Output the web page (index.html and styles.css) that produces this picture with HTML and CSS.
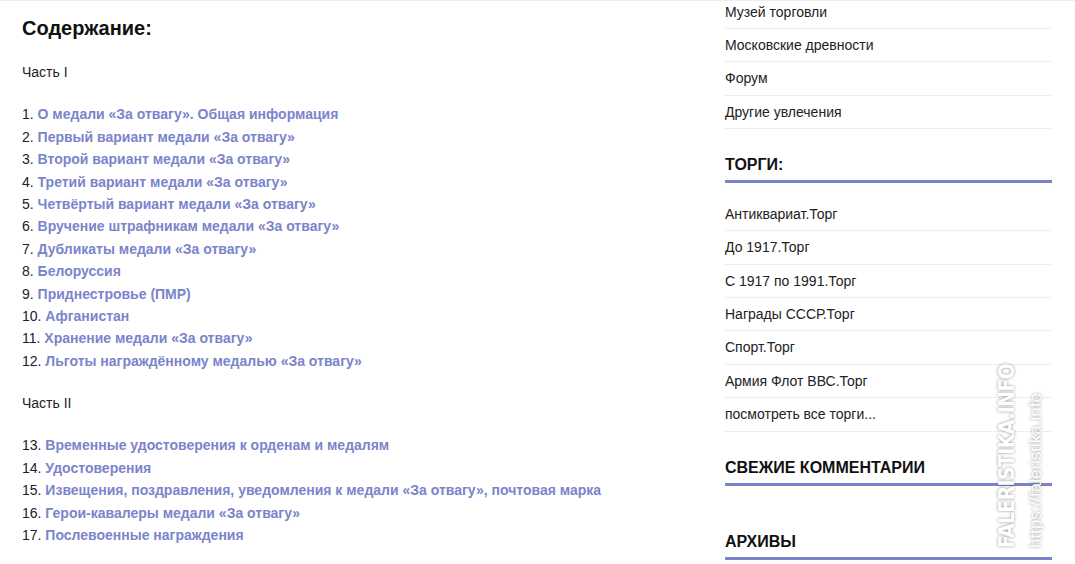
FILE: index.html
```html
<!DOCTYPE html>
<html lang="ru">
<head>
    <meta charset="UTF-8">
    <meta name="viewport" content="width=device-width, initial-scale=1.0">
    <title>Медаль «За отвагу»</title>
    <link rel="stylesheet" href="styles.css">
</head>
<body>

    <div class="page">
        <!-- Основной текст -->
        <main class="content">
            <h1>Содержание:</h1>

            <p>Часть I</p>

            <p class="toc">
                1. <a href="#">О медали «За отвагу». Общая информация</a><br>
                2. <a href="#">Первый вариант медали «За отвагу»</a><br>
                3. <a href="#">Второй вариант медали «За отвагу»</a><br>
                4. <a href="#">Третий вариант медали «За отвагу»</a><br>
                5. <a href="#">Четвёртый вариант медали «За отвагу»</a><br>
                6. <a href="#">Вручение штрафникам медали «За отвагу»</a><br>
                7. <a href="#">Дубликаты медали «За отвагу»</a><br>
                8. <a href="#">Белоруссия</a><br>
                9. <a href="#">Приднестровье (ПМР)</a><br>
                10. <a href="#">Афганистан</a><br>
                11. <a href="#">Хранение медали «За отвагу»</a><br>
                12. <a href="#">Льготы награждённому медалью «За отвагу»</a>
            </p>

            <p>Часть II</p>

            <p class="toc">
                13. <a href="#">Временные удостоверения к орденам и медалям</a><br>
                14. <a href="#">Удостоверения</a><br>
                15. <a href="#">Извещения, поздравления, уведомления к медали «За отвагу», почтовая марка</a><br>
                16. <a href="#">Герои-кавалеры медали «За отвагу»</a><br>
                17. <a href="#">Послевоенные награждения</a>
            </p>
        </main>

        <!-- Боковая колонка -->
        <aside class="sidebar">
            <div class="widget widget-top">
                <ul>
                    <li><a href="#">Музей торговли</a></li>
                    <li><a href="#">Московские древности</a></li>
                    <li><a href="#">Форум</a></li>
                    <li><a href="#">Другие увлечения</a></li>
                </ul>
            </div>

            <div class="widget">
                <h3>ТОРГИ:</h3>
                <ul>
                    <li><a href="#">Антиквариат.Торг</a></li>
                    <li><a href="#">До 1917.Торг</a></li>
                    <li><a href="#">С 1917 по 1991.Торг</a></li>
                    <li><a href="#">Награды СССР.Торг</a></li>
                    <li><a href="#">Спорт.Торг</a></li>
                    <li><a href="#">Армия Флот ВВС.Торг</a></li>
                    <li><a href="#">посмотреть все торги...</a></li>
                </ul>
            </div>

            <div class="widget">
                <h3>СВЕЖИЕ КОММЕНТАРИИ</h3>
                <ul class="empty"></ul>
            </div>

            <div class="widget">
                <h3>АРХИВЫ</h3>
            </div>
        </aside>
    </div>

    <!-- Водяной знак -->
    <div class="watermark">
        <span class="wm-name">FALERISTIKA.INFO</span>
        <span class="wm-url">https://faleristika.info</span>
    </div>

</body>
</html>
```

FILE: styles.css
```css
/* Общие стили */
* {
    box-sizing: border-box;
    margin: 0;
    padding: 0;
}

body {
    font-family: "Liberation Sans", Arial, sans-serif;
    font-size: 14px;
    line-height: 1.6;
    color: #333;
    background: #fff;
    overflow: hidden;
}

a {
    text-decoration: none;
}

.page {
    display: flex;
    box-shadow: inset 0 1px 0 #eee;
}

/* Основной текст */
.content {
    flex: 1;
    padding: 0 22px;
}

.content h1 {
    font-size: 20px;
    line-height: 24px;
    font-weight: bold;
    color: #111;
    margin: 16px 0 21px;
}

.content p {
    margin-bottom: 20px;
    color: #222;
}

.toc {
    color: #333;
}

.toc a {
    color: #7b84cb;
    font-weight: bold;
}

/* Боковая колонка */
.sidebar {
    width: 327px;
    margin-right: 23px;
    flex-shrink: 0;
}

.widget {
    margin-bottom: 26px;
}

.widget-top {
    margin-top: -4.5px;
}

.widget h3 {
    font-size: 16px;
    line-height: 19.2px;
    font-weight: bold;
    color: #111;
    padding-bottom: 6px;
    border-bottom: 3px solid #7b84cb;
    margin-bottom: 14.5px;
}

.widget ul {
    list-style: none;
}

.widget ul.empty {
    height: 6px;
}

.widget li {
    padding: 5px 0;
    border-bottom: 1px dotted #ddd;
}

.widget li a {
    color: #222;
}

/* Водяной знак */
.watermark {
    position: absolute;
    left: 995px;
    top: 358px;
    height: 190px;
    writing-mode: vertical-rl;
    transform: rotate(180deg);
    display: flex;
    flex-direction: column;
    align-items: flex-start;
    gap: 8px;
    color: #fff;
    text-shadow: 0 0 3px rgba(0, 0, 0, 0.45);
    white-space: nowrap;
}

.wm-name {
    font-family: "DejaVu Sans Condensed", "DejaVu Sans", sans-serif;
    font-weight: bold;
    font-size: 21px;
    line-height: 24px;
    letter-spacing: -0.6px;
}

.wm-url {
    font-family: "Liberation Sans", Arial, sans-serif;
    font-size: 17px;
    line-height: 18px;
}
```
